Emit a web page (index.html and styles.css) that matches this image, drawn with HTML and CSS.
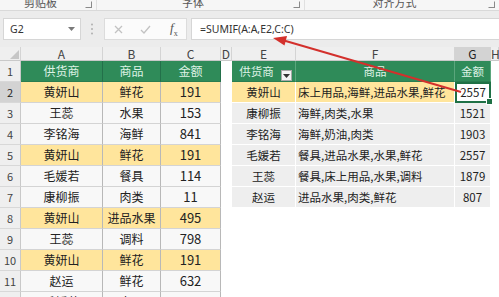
FILE: index.html
```html
<!DOCTYPE html>
<html lang="zh-CN">
<head>
    <meta charset="UTF-8">
    <title>SUMIF</title>
    <link rel="stylesheet" href="styles.css">
</head>
<body>
<div class="ribbon">
    <div class="group g1"><span class="group-label">剪贴板</span><span class="launcher"></span></div>
    <div class="group g2"><span class="group-label">字体</span><span class="launcher"></span></div>
    <div class="group g3"><span class="group-label">对齐方式</span><span class="launcher"></span></div>
</div>

<div class="formula-row">
    <div class="name-box">
        <span>G2</span>
        <svg class="drop" width="7" height="4" viewBox="0 0 7 4"><polygon points="0,0 7,0 3.5,4" fill="#7a7a7a"/></svg>
    </div>
    <svg class="dots" width="4" height="12" viewBox="0 0 4 12">
        <circle cx="2" cy="1.5" r="1" fill="#b0b0b0"/>
        <circle cx="2" cy="6" r="1" fill="#b0b0b0"/>
        <circle cx="2" cy="10.5" r="1" fill="#b0b0b0"/>
    </svg>
    <div class="fx-buttons">
        <svg class="btn-x" width="9" height="9" viewBox="0 0 9 9"><path d="M1 1L8 8M8 1L1 8" stroke="#c2c2c2" stroke-width="1.3"/></svg>
        <svg class="btn-ok" width="11" height="9" viewBox="0 0 11 9"><path d="M1 5L4 8L10 1" stroke="#c2c2c2" stroke-width="1.3" fill="none"/></svg>
        <span class="fx"><i>f</i><sub>x</sub></span>
    </div>
    <div class="formula-input">=SUMIF(A:A,E2,C:C)</div>
</div>

<div class="sheet">
    <!-- column headers -->
    <div class="ch corner"><svg width="21" height="14" viewBox="0 0 21 14"><polygon points="19,3 19,12 10,12" fill="#c6c6c6"/></svg></div>
    <div class="ch">A</div><div class="ch">B</div><div class="ch">C</div><div class="ch">D</div>
    <div class="ch">E</div><div class="ch">F</div><div class="ch active">G</div><div class="ch">H</div>

    <!-- row 1 -->
    <div class="rh">1</div>
    <div class="t hd">供货商</div><div class="t hd">商品</div><div class="t hd">金额</div><div class="blank"></div>
    <div class="r hd filter-cell">供货商<span class="filter"><svg width="7" height="4" viewBox="0 0 7 4"><polygon points="0,0 7,0 3.5,4" fill="#333"/></svg></span></div>
    <div class="r hd">商品</div><div class="r hd">金额</div><div class="blank"></div>

    <!-- row 2 -->
    <div class="rh active">2</div>
    <div class="t hl">黄妍山</div><div class="t hl">鲜花</div><div class="t hl n">191</div><div class="blank"></div>
    <div class="r hl">黄妍山</div><div class="r hl txt">床上用品,海鲜,进品水果,鲜花</div><div class="r n sel">2557</div><div class="blank"></div>

    <!-- row 3 -->
    <div class="rh">3</div>
    <div class="t">王蕊</div><div class="t">水果</div><div class="t n">153</div><div class="blank"></div>
    <div class="r">康柳振</div><div class="r txt">海鲜,肉类,水果</div><div class="r n">1521</div><div class="blank"></div>

    <!-- row 4 -->
    <div class="rh">4</div>
    <div class="t">李铭海</div><div class="t">海鲜</div><div class="t n">841</div><div class="blank"></div>
    <div class="r">李铭海</div><div class="r txt">海鲜,奶油,肉类</div><div class="r n">1903</div><div class="blank"></div>

    <!-- row 5 -->
    <div class="rh">5</div>
    <div class="t hl">黄妍山</div><div class="t hl">鲜花</div><div class="t hl n">191</div><div class="blank"></div>
    <div class="r">毛媛若</div><div class="r txt">餐具,进品水果,水果,鲜花</div><div class="r n">2557</div><div class="blank"></div>

    <!-- row 6 -->
    <div class="rh">6</div>
    <div class="t">毛媛若</div><div class="t">餐具</div><div class="t n">114</div><div class="blank"></div>
    <div class="r">王蕊</div><div class="r txt">餐具,床上用品,水果,调料</div><div class="r n">1879</div><div class="blank"></div>

    <!-- row 7 -->
    <div class="rh">7</div>
    <div class="t">康柳振</div><div class="t">肉类</div><div class="t n">11</div><div class="blank"></div>
    <div class="r">赵运</div><div class="r txt">进品水果,肉类,鲜花</div><div class="r n">807</div><div class="blank"></div>

    <!-- row 8 -->
    <div class="rh">8</div>
    <div class="t hl">黄妍山</div><div class="t hl">进品水果</div><div class="t hl n">495</div>
    <div class="blank span5"></div>

    <!-- row 9 -->
    <div class="rh">9</div>
    <div class="t">王蕊</div><div class="t">调料</div><div class="t n">798</div>
    <div class="blank span5"></div>

    <!-- row 10 -->
    <div class="rh">10</div>
    <div class="t hl">黄妍山</div><div class="t hl">鲜花</div><div class="t hl n">191</div>
    <div class="blank span5"></div>

    <!-- row 11 -->
    <div class="rh">11</div>
    <div class="t">赵运</div><div class="t">鲜花</div><div class="t n">632</div>
    <div class="blank span5"></div>

    <!-- row 12 -->
    <div class="rh">12</div>
    <div class="t">毛媛若</div><div class="t">水果</div><div class="t n">860</div>
    <div class="blank span5"></div>
</div>

<!-- red arrow drawn over the sheet -->
<svg class="arrow" width="499" height="297" viewBox="0 0 499 297">
    <line x1="461" y1="92" x2="284" y2="40.5" stroke="#d3302c" stroke-width="2"/>
    <polygon points="273,38 287,36 284.5,45.5" fill="#d3302c"/>
</svg>
</body>
</html>
```

FILE: styles.css
```css
* { box-sizing: border-box; }
body {
    margin: 0;
    width: 499px;
    height: 297px;
    overflow: hidden;
    position: relative;
    background: #fff;
    color: #222;
    font-family: "Noto Sans CJK SC", "Noto Sans", sans-serif;
}

/* ribbon group captions, cut off at the top */
.ribbon { height: 11px; display: flex; background: #f6f6f6; border-bottom: 1px solid #d9d9d9; overflow: hidden; }
.group { display: flex; align-items: flex-start; border-right: 1px solid #e0e0e0; }
.g1 { width: 97px; }
.g2 { width: 208px; }
.g3 { width: 194px; border-right: none; }
.group-label { flex: 1; text-align: center; font-size: 11px; line-height: 11px; margin-top: -3px; color: #555; }
.launcher { width: 7px; height: 7px; margin: 1px 4px 0; border: 1px solid #8a8a8a; border-top-color: transparent; border-left-color: transparent; }

/* name box + formula bar */
.formula-row { height: 36px; display: flex; align-items: center; padding: 0 0 0 3px; background: #ececec; }
.name-box { width: 78px; height: 22px; display: flex; align-items: center; justify-content: space-between; padding: 0 5px 0 6px; background: #fff; border: 1px solid #d6d6d6; font-family: "Noto Sans", sans-serif; font-size: 10.5px; color: #333; }
.dots { margin-left: 9px; }
.fx-buttons { width: 83px; height: 22px; margin-left: 10px; display: flex; align-items: center; background: #fbfbfb; border: 1px solid #dcdcdc; }
.btn-x { margin-left: 9px; }
.btn-ok { margin-left: 17px; }
.fx { margin-left: 19px; font-family: "Liberation Serif", serif; color: #555; font-size: 13px; }
.fx sub { font-size: 8px; }
.formula-input { flex: 1; height: 22px; margin-left: 4px; padding-left: 8px; display: flex; align-items: center; background: #fff; border: 1px solid #d6d6d6; border-right: none; font-family: "Noto Sans", sans-serif; font-size: 10.5px; color: #333; }

/* worksheet */
.sheet {
    display: grid;
    grid-template-columns: 21px 82px 58px 60px 11px 64px 159px 36px 8px;
    grid-template-rows: 14px repeat(12, 21px);
}
.ch { background: #efefef; border-right: 1px solid #d4d4d4; border-bottom: 1px solid #c9c9c9; text-align: center; font-size: 12px; line-height: 13px; color: #444; }
.ch.active { background: #d3d3d3; color: #222; }
.corner { padding: 0; }
.corner svg { display: block; }
.rh { background: #efefef; border-right: 1px solid #c9c9c9; border-bottom: 1px solid #d8d8d8; text-align: center; font-size: 11px; line-height: 20px; color: #444; }
.rh.active { background: #d3d3d3; color: #222; }
.blank { background: #fff; }
.span5 { grid-column: span 5; }

.t { background: #f8f8f8; border-right: 1px solid #b8b8b8; border-bottom: 1px solid #d4d4d4; text-align: center; font-size: 12px; line-height: 20px; }
.r { background: #eeeeee; border-right: 1px solid #fff; border-bottom: 1px solid #fff; text-align: center; font-size: 11.5px; line-height: 20px; }
.r.txt { text-align: left; padding-left: 2px; }
.n { font-size: 13px; }
.r.n { font-size: 11.5px; }
.hd { background: #2f8b59; color: #def2e5; border-right-color: #23704a; border-bottom-color: #2a7d50; }
.r.hd { border-right-color: #5aa67c; }
.hl { background: #ffe59c; }
.sel { background: #fff; border: 2px solid #1f7145; line-height: 17px; position: relative; }
.sel::after { content: ""; position: absolute; right: -4px; bottom: -4px; width: 5px; height: 5px; background: #1f7145; border: 1px solid #fff; }

.filter-cell { position: relative; padding-right: 14px; }
.filter { position: absolute; right: 3px; top: 9px; width: 11px; height: 11px; display: flex; align-items: center; justify-content: center; background: #f4f4f4; border: 1px solid #a9a9a9; }

.arrow { position: absolute; left: 0; top: 0; pointer-events: none; }
```
